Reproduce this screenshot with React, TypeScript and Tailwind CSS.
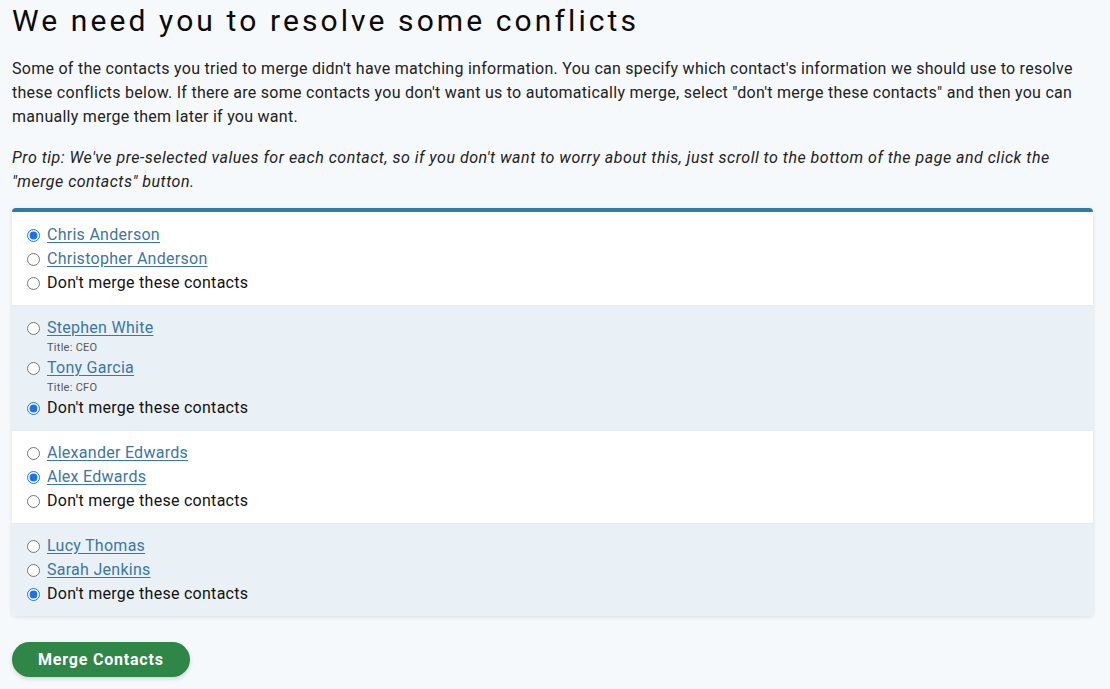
import { useState } from 'react';

type Contact = { id: string; name: string; title?: string };
type Conflict = { id: string; contacts: Contact[]; selected: string };

const CONFLICTS: Conflict[] = [
  {
    id: 'c1',
    contacts: [
      { id: 'chris', name: 'Chris Anderson' },
      { id: 'christopher', name: 'Christopher Anderson' },
    ],
    selected: 'chris',
  },
  {
    id: 'c2',
    contacts: [
      { id: 'stephen', name: 'Stephen White', title: 'CEO' },
      { id: 'tony', name: 'Tony Garcia', title: 'CFO' },
    ],
    selected: 'none',
  },
  {
    id: 'c3',
    contacts: [
      { id: 'alexander', name: 'Alexander Edwards' },
      { id: 'alex', name: 'Alex Edwards' },
    ],
    selected: 'alex',
  },
  {
    id: 'c4',
    contacts: [
      { id: 'lucy', name: 'Lucy Thomas' },
      { id: 'sarah', name: 'Sarah Jenkins' },
    ],
    selected: 'none',
  },
];

export default function App() {
  const [choices, setChoices] = useState<Record<string, string>>(
    Object.fromEntries(CONFLICTS.map((c) => [c.id, c.selected])),
  );

  const pick = (conflictId: string, value: string) =>
    setChoices((prev) => ({ ...prev, [conflictId]: value }));

  return (
    <div className="min-h-[689px] bg-[#f6f9fc] px-3 pr-[17px] font-['Roboto',sans-serif] tracking-[0.27px] text-[#222]">
      <h1 className="pt-[3px] text-[30px] leading-[36px] tracking-[3.1px] text-[#0a0a0a]">
        We need you to resolve some conflicts
      </h1>

      <p className="mt-[18px] text-[16px] leading-[24px]">
        Some of the contacts you tried to merge didn't have matching information. You can specify
        which contact's information we should use to resolve these conflicts below. If there are
        some contacts you don't want us to automatically merge, select "don't merge these contacts"
        and then you can manually merge them later if you want.
      </p>

      <p className="mt-[17px] text-[16px] italic leading-[24px] tracking-[0.5px]">
        Pro tip: We've pre-selected values for each contact, so if you don't want to worry about
        this, just scroll to the bottom of the page and click the "merge contacts" button.
      </p>

      <div className="mt-[14px] overflow-hidden rounded-[4px] border-t-4 border-[#2e7da4] bg-white shadow-[0_1px_4px_rgba(0,0,0,0.12)]">
        {CONFLICTS.map((conflict, i) => (
          <div
            key={conflict.id}
            className={`px-[15px] pb-[10px] ${i === 0 ? 'pt-[11px]' : 'pt-[10px]'} ${
              i % 2 === 1 ? 'bg-[#e9f1f7]' : 'bg-white'
            } ${i < CONFLICTS.length - 1 ? 'border-b border-[#e4ebf1]' : ''}`}
          >
            {conflict.contacts.map((c) => (
              <div key={c.id}>
                <label className="flex h-[24px] items-center text-[16px]">
                  <input
                    type="radio"
                    name={conflict.id}
                    checked={choices[conflict.id] === c.id}
                    onChange={() => pick(conflict.id, c.id)}
                    className="m-0 mr-[7px] h-[13px] w-[13px] accent-[#1a73e8]"
                  />
                  <a href="#" className="text-[#3b76a6] underline underline-offset-2">
                    {c.name}
                  </a>
                </label>
                {c.title && (
                  <div className="h-[16px] pl-[20px] text-[11px] leading-[16px] text-[#555]">
                    Title: {c.title}
                  </div>
                )}
              </div>
            ))}
            <label className="flex h-[24px] items-center text-[16px]">
              <input
                type="radio"
                name={conflict.id}
                checked={choices[conflict.id] === 'none'}
                onChange={() => pick(conflict.id, 'none')}
                className="m-0 mr-[7px] h-[13px] w-[13px] accent-[#1a73e8]"
              />
              <span className="text-[#111]">Don't merge these contacts</span>
            </label>
          </div>
        ))}
      </div>

      <button className="mt-[26px] h-[35px] rounded-full bg-[#2e8647] px-[26px] text-[16px] font-bold tracking-[0.8px] text-white shadow-[0_2px_4px_rgba(0,0,0,0.15)]">
        Merge Contacts
      </button>
    </div>
  );
}
